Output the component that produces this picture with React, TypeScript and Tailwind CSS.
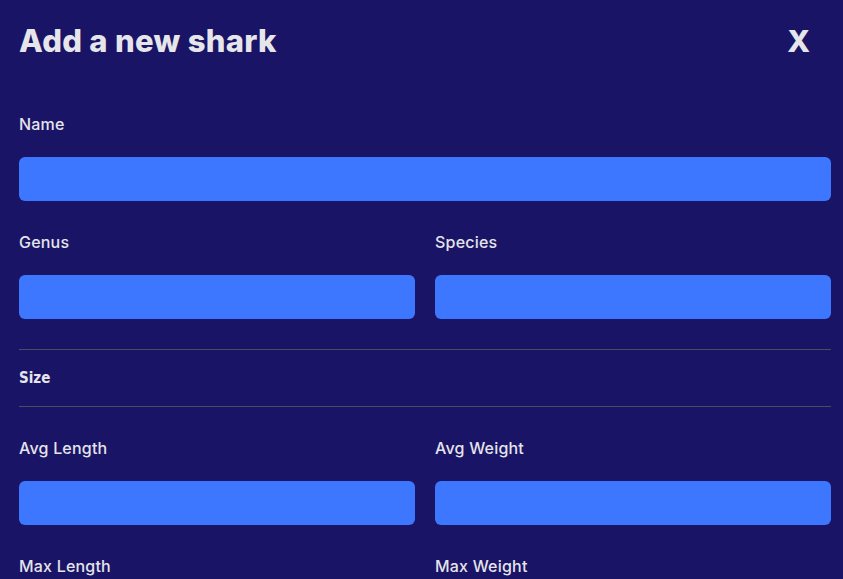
import * as React from "react";

function Field({ label }: { label: string }) {
  return (
    <div className="flex flex-col">
      <label className="h-6 text-[16px] leading-6 font-medium tracking-[0.2px] text-[#e4e4ea]">
        {label}
      </label>
      <input
        type="text"
        className="mt-[21px] h-11 w-full rounded-md bg-[#3e77ff] outline-none"
      />
    </div>
  );
}

export default function App() {
  return (
    <div
      className="h-[579px] w-full overflow-hidden bg-[#1a1467] pl-[19px] pr-[12px] pt-[21px]"
      style={{ fontFamily: "Inter, 'Noto Sans', sans-serif" }}
    >
      {/* Header */}
      <div className="flex h-10 items-center justify-between">
        <h1 className="text-[31px] leading-10 font-extrabold tracking-[0.3px] text-[#e6e6ea]">
          Add a new shark
        </h1>
        <button
          type="button"
          className="mr-[21px] text-[30px] leading-10 font-extrabold text-[#e6e6ea]"
        >
          X
        </button>
      </div>

      <div className="mt-[51px] flex flex-col">
        <Field label="Name" />

        <div className="mt-[29px] grid grid-cols-2 gap-x-5">
          <Field label="Genus" />
          <Field label="Species" />
        </div>

        <div className="mt-[30px] border-t border-[#4b4b62]" />
        <div className="flex h-[56px] items-center">
          <span
            className="text-[15px] font-bold text-[#e6e6ea]"
            style={{ fontFamily: "'DejaVu Sans Condensed', 'DejaVu Sans', sans-serif" }}
          >
            Size
          </span>
        </div>
        <div className="border-t border-[#4b4b62]" />

        <div className="mt-[29px] grid grid-cols-2 gap-x-5 gap-y-[29px]">
          <Field label="Avg Length" />
          <Field label="Avg Weight" />
          <Field label="Max Length" />
          <Field label="Max Weight" />
        </div>
      </div>
    </div>
  );
}
